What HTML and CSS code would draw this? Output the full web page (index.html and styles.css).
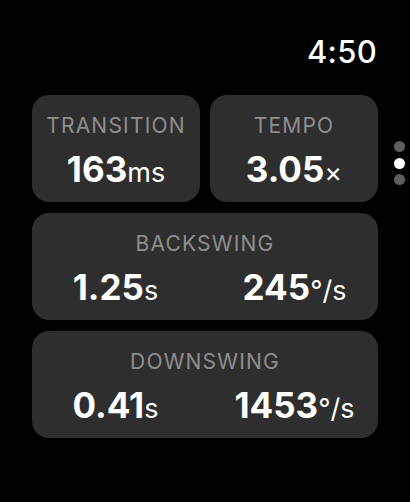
FILE: index.html
```html
<!DOCTYPE html>
<html>
<head>
<meta charset="utf-8">
<link rel="stylesheet" href="styles.css">
</head>
<body>
<div class="screen">
  <header class="status">
    <span class="time">4:50</span>
  </header>
  <main class="content">
    <section class="cards">
      <div class="row">
        <div class="card">
          <div class="label">TRANSITION</div>
          <div class="values">
            <div class="value"><span class="num">163</span><span class="unit">ms</span></div>
          </div>
        </div>
        <div class="card">
          <div class="label">TEMPO</div>
          <div class="values">
            <div class="value"><span class="num">3.05</span><span class="unit">×</span></div>
          </div>
        </div>
      </div>
      <div class="card">
        <div class="label">BACKSWING</div>
        <div class="values two">
          <div class="value"><span class="num">1.25</span><span class="unit">s</span></div>
          <div class="value"><span class="num">245</span><span class="unit">°/s</span></div>
        </div>
      </div>
      <div class="card">
        <div class="label">DOWNSWING</div>
        <div class="values two">
          <div class="value"><span class="num">0.41</span><span class="unit">s</span></div>
          <div class="value"><span class="num">1453</span><span class="unit">°/s</span></div>
        </div>
      </div>
    </section>
    <nav class="pager">
      <span class="dot"></span>
      <span class="dot active"></span>
      <span class="dot"></span>
    </nav>
  </main>
</div>
</body>
</html>
```

FILE: styles.css
```css
html, body {
  margin: 0;
  padding: 0;
  background: #000;
}
body {
  font-family: Inter, "Noto Sans", sans-serif;
  color: #fff;
  width: 410px;
  height: 502px;
  overflow: hidden;
}
.status {
  display: flex;
  justify-content: flex-end;
  padding: 34px 33px 0 0;
  height: 36px;
}
.time {
  font-size: 31px;
  line-height: 36px;
  font-weight: 500;
  letter-spacing: 0.3px;
}
.content {
  display: flex;
  margin-top: 25px;
  padding-left: 32px;
}
.cards {
  width: 346px;
  display: flex;
  flex-direction: column;
  gap: 11px;
}
.row {
  display: flex;
  gap: 10px;
}
.row .card {
  flex: 1;
}
.card {
  background: #2e2e2e;
  border-radius: 17px;
  height: 107px;
  box-sizing: border-box;
  padding-top: 19px;
  text-align: center;
}
.label {
  font-size: 21px;
  line-height: 24px;
  color: #8e8e8e;
  letter-spacing: 1.2px;
}
.values {
  display: flex;
  justify-content: center;
  margin-top: 11px;
}
.values.two {
  display: grid;
  grid-template-columns: 1fr 1fr;
  column-gap: 12px;
}
.value {
  line-height: 40px;
  white-space: nowrap;
}
.num {
  font-size: 35px;
  font-weight: 700;
}
.unit {
  font-size: 27px;
  font-weight: 400;
}
.pager {
  display: flex;
  flex-direction: column;
  gap: 5.5px;
  margin-left: 15.5px;
  margin-top: 46px;
}
.dot {
  width: 11px;
  height: 11px;
  border-radius: 50%;
  background: #5e5e5e;
}
.dot.active {
  background: #fff;
}
```
